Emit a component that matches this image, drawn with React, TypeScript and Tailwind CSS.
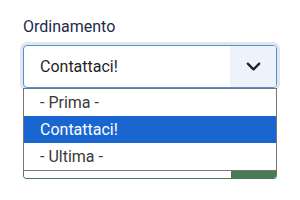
import React from 'react';
import { ChevronDown } from 'lucide-react';

const options = [
  { label: '- Prima -', active: false },
  { label: 'Contattaci!', active: true },
  { label: '- Ultima -', active: false },
];

export default function App() {
  return (
    <div className="w-[300px] h-[200px] bg-white pt-[17px] px-[23px] font-['Roboto',sans-serif]">
      <label className="block text-[16px] leading-[20px] text-[#1d2a4a]">Ordinamento</label>

      <div className="mt-[8px] w-[254px] h-[43px] flex rounded-[4px] border border-[#4a90e8] ring-[3px] ring-[#e6e6e6]">
        <div className="flex-1 flex items-center pl-[16px] text-[16px] text-[#1f1f1f]">Contattaci!</div>
        <div className="w-[46px] flex items-center justify-center bg-[#eef3fb] rounded-r-[3px]">
          <ChevronDown size={23} strokeWidth={2.3} className="text-[#1f1f1f]" />
        </div>
      </div>

      <div className="w-[254px] border border-[#767676] bg-white">
        {options.map((o) => (
          <div
            key={o.label}
            className={
              o.active
                ? 'h-[27px] flex items-center pl-[16px] text-[16px] bg-[#1a66d1] text-white'
                : 'h-[27px] flex items-center pl-[16px] text-[16px] text-[#3a3a3a]'
            }
          >
            {o.label}
          </div>
        ))}
      </div>

      <div className="w-[254px] h-[8px] flex border-x border-b border-[#477a55] rounded-b-[4px] overflow-hidden">
        <div className="flex-1 bg-white" />
        <div className="w-[45px] bg-[#477a55]" />
      </div>
    </div>
  );
}
